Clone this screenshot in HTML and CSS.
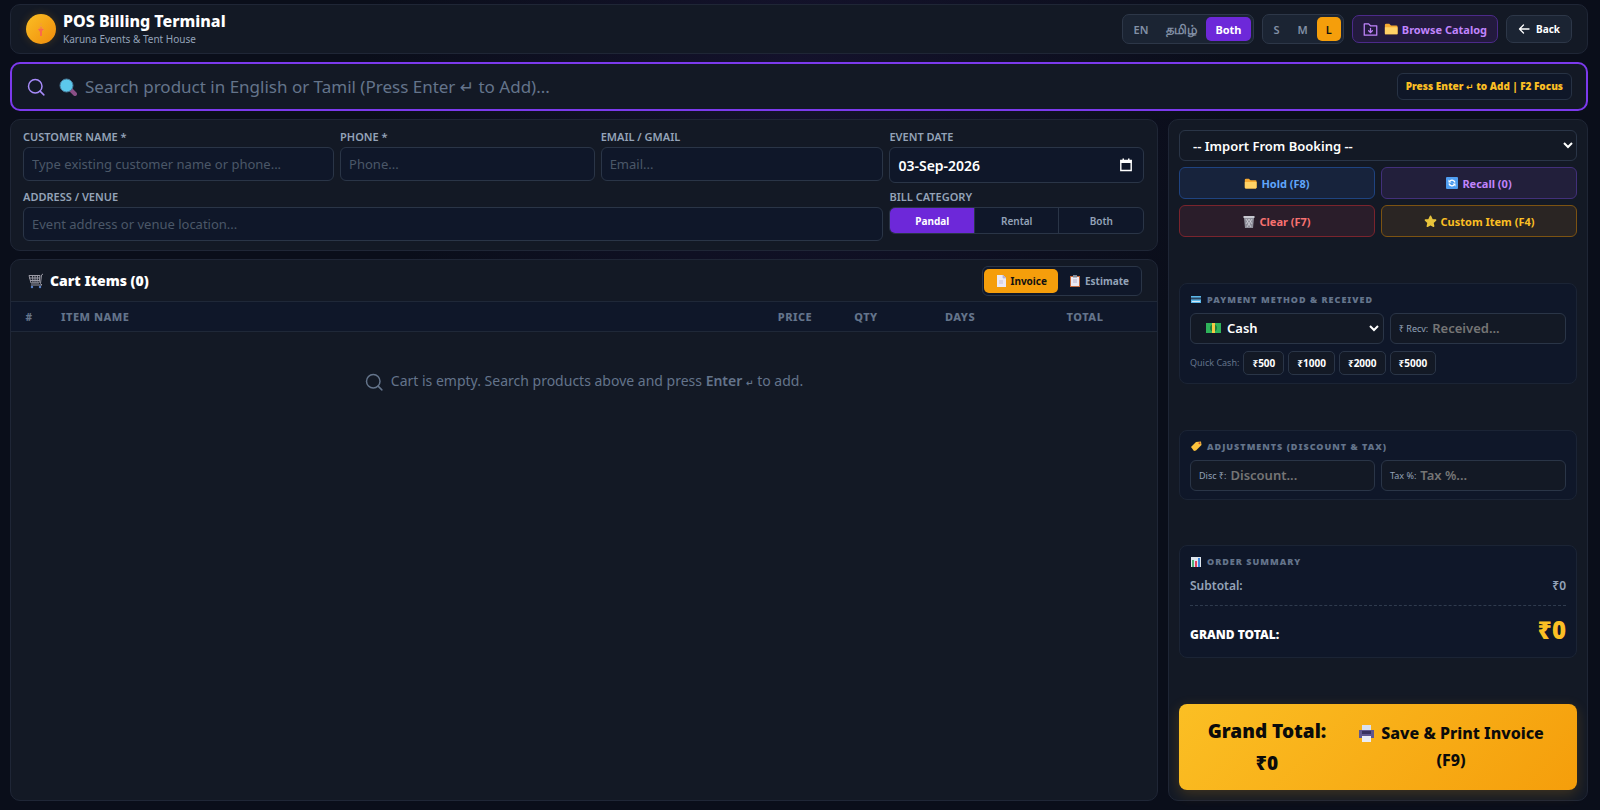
FILE: index.html
```html
<!DOCTYPE html>
<html lang="en">
<head>
  <meta charset="UTF-8">
  <meta name="viewport" content="width=device-width, initial-scale=1.0">
  <title>POS Billing Terminal</title>
  <link rel="stylesheet" href="styles.css">
</head>
<body>
  <!-- Shared icons -->
  <svg class="sprite" aria-hidden="true">
    <symbol id="search" viewBox="0 0 24 24"><circle cx="11" cy="11" r="9" fill="none" stroke="currentColor" stroke-width="2"/><path d="M17.5 17.5 22.5 22.5" stroke="currentColor" stroke-width="2" stroke-linecap="round"/></symbol>
    <symbol id="folder" viewBox="0 0 16 16"><path d="M1 3.5Q1 2 2.5 2H6l2 2h6q1.500 0 1.500 1.500V13q0 1-1 1H2q-1 0-1-1z" fill="#f5a932"/><path d="M1 6h14.500v7q0 1-1 1H2q-1 0-1-1z" fill="#ffd266"/></symbol>
  </svg>

  <div class="terminal">
    <header class="panel topbar">
      <div class="logo">
        <svg width="12" height="18" viewBox="0 0 12 18"><path d="M6 3v2M3 10l3-4 3 4z" stroke="#f59a3c" fill="#f5853c"/><path d="M3 9h6l-2 2v5H5v-4z" fill="#fb6a4a"/></svg>
      </div>
      <div class="brand">
        <h1>POS Billing Terminal</h1>
        <p>Karuna Events &amp; Tent House</p>
      </div>
      <div class="top-actions">
        <div class="pill-group">
          <button type="button">EN</button>
          <button type="button" lang="ta">தமிழ்</button>
          <button type="button" class="active-purple">Both</button>
        </div>
        <div class="pill-group">
          <button type="button">S</button>
          <button type="button">M</button>
          <button type="button" class="active-amber">L</button>
        </div>
        <button type="button" class="top-btn catalog">
          <svg width="15" height="15" viewBox="0 0 24 24" fill="none" stroke="currentColor" stroke-width="2" stroke-linejoin="round" stroke-linecap="round"><path d="M2 3h7l3 3h10v15H2zM12 10v7M9 14l3 3 3-3"/></svg>
          <span class="with-icon"><svg width="14" height="14"><use href="#folder"/></svg>Browse Catalog</span>
        </button>
        <button type="button" class="top-btn">
          <svg width="12" height="12" viewBox="0 0 12 12" fill="none" stroke="currentColor" stroke-width="1.300" stroke-linecap="round" stroke-linejoin="round"><path d="M11 6H1.500M5.500 2l-4 4 4 4"/></svg>
          Back
        </button>
      </div>
    </header>

    <div class="search-bar">
      <svg class="search-icon" width="18" height="18"><use href="#search"/></svg>
      <svg width="18" height="18" viewBox="0 0 18 18"><path d="M11 11l5 5" stroke="#8a4f86" stroke-width="4" stroke-linecap="round"/><circle cx="7.500" cy="7.500" r="6.500" fill="#5cc8ec" stroke="#4a7d9c"/></svg>
      <input type="text" aria-label="Search product" placeholder="Search product in English or Tamil (Press Enter ↵ to Add)...">
      <span class="hint">Press Enter <span class="key">↵</span> to Add | F2 Focus</span>
    </div>

    <div class="workspace">
      <main class="main-col">
        <form class="panel customer">
          <div class="field">
            <label for="customer">Customer Name *</label>
            <input type="text" id="customer" placeholder="Type existing customer name or phone...">
          </div>
          <div class="field">
            <label for="phone">Phone *</label>
            <input type="tel" id="phone" placeholder="Phone...">
          </div>
          <div class="field">
            <label for="email">Email / Gmail</label>
            <input type="email" id="email" placeholder="Email...">
          </div>
          <div class="field">
            <label for="eventDate">Event Date</label>
            <div class="date-box">
              <input type="text" id="eventDate" value="03-Sep-2026">
              <svg width="12" height="14" viewBox="0 0 12 14"><path d="M.800 2.500h10.400v10H.800z" fill="none" stroke="#fff" stroke-width="1.400"/><path d="M.500 2h11v3H.500zM2.500.500h1.500V3H2.500zM8 .500h1.500V3H8z" fill="#fff"/></svg>
            </div>
          </div>
          <div class="field address">
            <label for="address">Address / Venue</label>
            <input type="text" id="address" placeholder="Event address or venue location...">
          </div>
          <div class="field" role="group" aria-labelledby="categoryLabel">
            <span class="field-label" id="categoryLabel">Bill Category</span>
            <div class="segments">
              <button type="button" class="active-purple">Pandal</button>
              <button type="button">Rental</button>
              <button type="button">Both</button>
            </div>
          </div>
        </form>

        <section class="panel cart">
          <div class="cart-head">
            <svg width="16" height="16" viewBox="0 0 16 16" fill="none"><path d="M1 2.500h11L11 10H3z M1 5h11M2 7.500h10M4.500 2.500l.5 7.500M7 2.500V10M9.500 2.500 9 10M15 1l-1.500 1-1 8.500 1.500 1.500H3" stroke="#9a9aa5"/><circle cx="4" cy="14" r="1.200" fill="#5b83c9"/><circle cx="12" cy="14" r="1.200" fill="#5b83c9"/></svg>
            <h2>Cart Items (0)</h2>
            <div class="doc-type">
              <button type="button" class="active-amber">
                <svg width="12" height="12" viewBox="0 0 12 12"><path d="M2 0h6l3 3v9H2z" fill="#ece9f2"/><path d="M8 0v3h3zM4 6h4M4 8h4" fill="#b9b2cc" stroke="#b9b2cc" stroke-width=".7"/></svg>
                Invoice
              </button>
              <button type="button">
                <svg width="12" height="12" viewBox="0 0 12 12"><path d="M1 1h10v11H1z" fill="#c1693f"/><path d="M2 2h8v9H2z" fill="#ece9f2"/><path d="M4 0h4v2.500H4z" fill="#7f8794"/><path d="M4 5h4M4 7h4" stroke="#b9b2cc"/></svg>
                Estimate
              </button>
            </div>
          </div>
          <table>
            <thead>
              <tr>
                <th class="col-no">#</th>
                <th class="col-item">Item Name</th>
                <th class="col-price">Price</th>
                <th class="col-qty">Qty</th>
                <th class="col-days">Days</th>
                <th class="col-total">Total</th>
              </tr>
            </thead>
            <tbody>
              <tr>
                <td colspan="6">
                  <div class="empty">
                    <svg width="18" height="18"><use href="#search"/></svg>
                    <span>Cart is empty. Search products above and press <strong>Enter <span class="key">↵</span></strong> to add.</span>
                  </div>
                </td>
              </tr>
            </tbody>
          </table>
        </section>
      </main>

      <aside class="panel side">
        <div class="quick">
          <select class="booking" aria-label="Import from booking">
            <option>-- Import From Booking --</option>
          </select>
          <button type="button" class="action hold"><svg width="13" height="13"><use href="#folder"/></svg>Hold (F8)</button>
          <button type="button" class="action recall"><svg width="12" height="12" viewBox="0 0 12 12"><rect width="12" height="12" rx="1" fill="#4f9df0"/><path d="M9 5.500A3 3 0 0 0 4 4M3 6.500A3 3 0 0 0 8 8" fill="none" stroke="#fff" stroke-width="1.300"/><path d="M2.500 2.500v3h3zM9.500 9.500v-3h-3z" fill="#fff"/></svg>Recall (0)</button>
          <button type="button" class="action clear"><svg width="12" height="13" viewBox="0 0 12 13"><path d="M.500 1h11v2H.500z" fill="#c9c9d1"/><path d="M1 3h10l-1 10H2z" fill="#8e8e99"/><path d="M3 4l5 8M6 4l3 5M9 4l-5 8M6 4l-3 5" stroke="#d0d0d8" stroke-width=".8"/></svg>Clear (F7)</button>
          <button type="button" class="action custom"><svg width="13" height="13" viewBox="0 0 12 12"><path d="M6 1.200l1.400 3.100 3.300.400-2.500 2.300.700 3.400L6 8.800 3.100 10.400l.700-3.400-2.500-2.300 3.300-.400z" fill="#e9c53c" stroke="#e9c53c" stroke-width="1.400" stroke-linejoin="round"/></svg>Custom Item (F4)</button>
        </div>

        <section class="box">
          <h3><svg width="12" height="10" viewBox="0 0 12 10"><path d="M1 2h10v7H1z" fill="#5cb8ea"/><path d="M1 3.500h10v2H1z" fill="#2b4560"/><path d="M2 7h8v1H2z" fill="#d5e7f2"/></svg>Payment Method &amp; Received</h3>
          <div class="pay-row">
            <div class="control pay-method">
              <svg width="15" height="12" viewBox="0 0 15 12"><path d="M0 1h15v10H0z" fill="#2fb35a"/><circle cx="7.500" cy="6" r="3.500" fill="#1c7c3c"/><path d="M6 1h3v10H6z" fill="#f6c945"/></svg>
              <select aria-label="Payment method"><option>Cash</option></select>
            </div>
            <div class="control">
              <label for="received">₹ Recv:</label>
              <input type="text" id="received" placeholder="Received...">
            </div>
          </div>
          <div class="cash-row">
            <span>Quick Cash:</span>
            <button type="button">₹500</button>
            <button type="button">₹1000</button>
            <button type="button">₹2000</button>
            <button type="button">₹5000</button>
          </div>
        </section>

        <section class="box">
          <h3><svg width="12" height="10" viewBox="0 0 12 10"><path d="M1 6l5-5 5-.500L11.500 4 6 9.500 4 10z" fill="#fbc13c"/><circle cx="9.500" cy="2.300" r="1" fill="#c74b36"/></svg>Adjustments (Discount &amp; Tax)</h3>
          <div class="adjust-row">
            <div class="control">
              <label for="discount">Disc ₹:</label>
              <input type="text" id="discount" placeholder="Discount...">
            </div>
            <div class="control">
              <label for="tax">Tax %:</label>
              <input type="text" id="tax" placeholder="Tax %...">
            </div>
          </div>
        </section>

        <section class="box">
          <h3><svg width="12" height="12" viewBox="0 0 12 12"><path d="M1 1h10v10H1z" fill="#dfe6ee"/><path d="M2 4h2v7H2z" fill="#4eb077"/><path d="M5 5h2v6H5z" fill="#e5405e"/><path d="M8 2h2v9H8z" fill="#3f86dc"/></svg>Order Summary</h3>
          <div class="subtotal"><span>Subtotal:</span><span>₹0</span></div>
          <div class="grand"><span>GRAND TOTAL:</span><strong>₹0</strong></div>
        </section>

        <button type="button" class="save-btn">
          <span class="save-total">Grand Total: ₹0</span>
          <span class="save-text"><svg width="17" height="17" viewBox="0 0 17 17"><path d="M4 0h9v6H4z" fill="#d9e0f0"/><path d="M1 5h15v8H1z" fill="#5f5790"/><path d="M4 6h9v3H4z" fill="#37315f"/><path d="M4 11h9v6H4z" fill="#e9ecf6"/></svg> Save &amp; Print Invoice (F9)</span>
        </button>
      </aside>
    </div>
  </div>
</body>
</html>
```
FILE: styles.css
```css
* {
  box-sizing: border-box;
}
body {
  margin: 0;
  font-family: "Noto Sans", "Segoe UI", "DejaVu Sans", sans-serif;
  font-size: 13px;
  color: #fff;
  background: radial-gradient(circle at 50% 8%, #14122c 0, #0a0e1a 40%);
  background-color: #0a0e1a;
}
h1, h2, h3, p {
  margin: 0;
}
button, input, select {
  font-family: inherit;
  color: inherit;
}
button {
  cursor: pointer;
  padding: 0;
  border: 0;
  background: none;
}
input {
  min-width: 0;
  outline: none;
}
svg {
  flex: none;
}
.sprite {
  position: absolute;
  width: 0;
  height: 0;
}
.terminal {
  display: flex;
  flex-direction: column;
  gap: 8px;
  min-height: 100vh;
  padding: 4px 12px 9px 10px;
}
.panel {
  background: #131925;
  border: 1px solid #1f2636;
  border-radius: 10px;
}
.key {
  font-size: 9px;
}

/* Top bar */
.topbar {
  display: flex;
  align-items: center;
  height: 50px;
  padding: 0 15px;
}
.logo {
  display: flex;
  align-items: center;
  justify-content: center;
  width: 30px;
  height: 30px;
  border-radius: 50%;
  background: linear-gradient(135deg, #fbbf24, #f08c0c);
  box-shadow: 0 0 10px rgba(245, 158, 11, 0.2);
}
.brand {
  margin-left: 7px;
}
.brand h1 {
  font-size: 16px;
  font-weight: 800;
  line-height: 19px;
}
.brand p {
  font-size: 10px;
  line-height: 16px;
  color: #94a3b8;
}
.top-actions {
  display: flex;
  align-items: center;
  gap: 8px;
  margin-left: auto;
}
.pill-group {
  display: flex;
  height: 30px;
  padding: 2px;
  border: 1px solid #2d3748;
  border-radius: 7px;
  background: #1b2433;
}
.pill-group button {
  padding: 0 9px;
  border-radius: 5px;
  font-size: 11px;
  font-weight: 600;
  color: #8290a6;
}
.pill-group button:lang(ta) {
  font-size: 13px;
}
.pill-group .active-purple,
.segments .active-purple {
  background: #6d28d9;
  color: #fff;
  font-weight: 700;
}
.pill-group .active-amber,
.doc-type .active-amber {
  background: #f59e0b;
  color: #111;
}
.top-btn {
  display: flex;
  align-items: center;
  gap: 6px;
  height: 28px;
  padding: 0 11px;
  border: 1px solid #2d3748;
  border-radius: 7px;
  background: #1b2433;
  font-size: 10px;
  font-weight: 700;
}
.catalog {
  padding: 0 10px;
  color: #c084fc;
  border-color: #4c2a8a;
  background: #231a3e;
  font-size: 11px;
}
.with-icon {
  display: flex;
  align-items: center;
  gap: 4px;
}

/* Search */
.search-bar {
  display: flex;
  align-items: center;
  height: 49px;
  padding: 0 14px 0 15px;
  border: 2px solid #7c3aed;
  border-radius: 10px;
  background: #131925;
}
.search-icon {
  margin-right: 14px;
  color: #a78bfa;
}
.search-bar input {
  flex: 1;
  padding: 0 0 0 8px;
  border: 0;
  background: none;
  font-size: 17px;
}
.search-bar input::placeholder {
  color: #64748b;
}
.hint {
  padding: 0 8px;
  border: 1px solid #273244;
  border-radius: 6px;
  background: #0f1728;
  font-size: 10px;
  font-weight: 900;
  line-height: 24px;
  color: #fbbf24;
}

/* Columns */
.workspace {
  display: flex;
  flex: 1;
  gap: 10px;
}
.main-col {
  display: flex;
  flex: 1;
  flex-direction: column;
  gap: 8px;
  min-width: 0;
}

/* Customer form */
.customer {
  display: grid;
  grid-template-columns: 22fr 18fr 20fr 18fr;
  gap: 6px;
  padding: 9px 13px 9px 12px;
}
.field {
  display: flex;
  flex-direction: column;
  gap: 2px;
  min-width: 0;
}
.address {
  grid-column: span 3;
}
.field label,
.field-label {
  font-size: 11px;
  font-weight: 600;
  line-height: 16px;
  text-transform: uppercase;
  color: #94a3b8;
}
.field input {
  height: 34px;
  padding: 0 8px;
  border: 1px solid #2a3547;
  border-radius: 6px;
  background: #0f1729;
  font-size: 13px;
}
.field input::placeholder {
  color: #4b5768;
}
.date-box {
  display: flex;
  align-items: center;
  height: 36px;
  padding-right: 11px;
  border: 1px solid #2a3547;
  border-radius: 6px;
  background: #0f1729;
}
.field .date-box input {
  flex: 1;
  border: 0;
  background: none;
  font-size: 14px;
  font-weight: 600;
}
.segments {
  display: flex;
  height: 27px;
  border: 1px solid #2a3547;
  border-radius: 6px;
  background: #0f1729;
  overflow: hidden;
}
.segments button {
  flex: 1;
  font-size: 10px;
  font-weight: 600;
  color: #94a3b8;
}
.segments button + button {
  border-left: 1px solid #2a3547;
}

/* Cart */
.cart {
  flex: 1;
  overflow: hidden;
}
.cart-head {
  display: flex;
  align-items: center;
  gap: 6px;
  height: 41px;
  padding: 0 15px 0 17px;
}
.cart-head h2 {
  font-size: 14px;
  font-weight: 900;
}
.doc-type {
  display: flex;
  height: 30px;
  margin-left: auto;
  padding: 2px 1px;
  border: 1px solid #2a3547;
  border-radius: 6px;
  background: #0f1729;
}
.doc-type button {
  display: flex;
  align-items: center;
  gap: 4px;
  padding: 0 11px;
  border-radius: 5px;
  font-size: 10px;
  font-weight: 700;
  color: #94a3b8;
}
.cart table {
  width: 100%;
  table-layout: fixed;
  border-collapse: collapse;
}
.cart th {
  height: 30px;
  padding: 0;
  border-top: 1px solid #1f2838;
  border-bottom: 1px solid #1f2838;
  background: #0f1729;
  font-size: 11px;
  font-weight: 800;
  letter-spacing: 0.5px;
  text-transform: uppercase;
  color: #64748b;
}
.cart .col-no {
  width: 36px;
  font-size: 10px;
}
.cart .col-item {
  padding-left: 14px;
  text-align: left;
}
.col-price {
  width: 60px;
}
.col-qty {
  width: 82px;
}
.col-days {
  width: 106px;
}
.col-total {
  width: 144px;
}
.cart td {
  padding: 39px 0;
}
.empty {
  display: flex;
  align-items: center;
  justify-content: center;
  gap: 8px;
  font-size: 14px;
  line-height: 20px;
  color: #64748b;
}
.empty strong {
  font-weight: 600;
}

/* Side panel */
.side {
  display: flex;
  flex-direction: column;
  justify-content: space-between;
  width: 420px;
  padding: 10px;
}
.quick {
  display: grid;
  grid-template-columns: 1fr 1fr;
  gap: 6px;
}
.booking {
  grid-column: span 2;
  height: 31px;
  padding: 0 0 0 9px;
  border: 1px solid #2a3547;
  border-radius: 6px;
  background: #131925;
  font-size: 13px;
  font-weight: 600;
}
.action {
  display: flex;
  align-items: center;
  justify-content: center;
  gap: 4px;
  height: 32px;
  border: 1px solid;
  border-radius: 6px;
  font-size: 11px;
  font-weight: 700;
}
.hold {
  color: #60a5fa;
  border-color: #1f4380;
  background: #17233c;
}
.recall {
  color: #c084fc;
  border-color: #42307a;
  background: #221f3b;
}
.clear {
  color: #f87171;
  border-color: #7a242d;
  background: #2a1d2a;
}
.custom {
  color: #fbbf24;
  border-color: #7c5312;
  background: #2a2523;
}
.box {
  padding: 8px 10px;
  border: 1px solid #1b2435;
  border-radius: 8px;
  background: #0f1729;
}
.box h3 {
  display: flex;
  align-items: center;
  gap: 5px;
  margin-bottom: 6px;
  font-size: 9px;
  font-weight: 900;
  line-height: 15px;
  letter-spacing: 1px;
  text-transform: uppercase;
  color: #64748b;
}
.pay-row,
.adjust-row {
  display: grid;
  grid-template-columns: 11fr 10fr;
  gap: 6px;
}
.adjust-row {
  grid-template-columns: 1fr 1fr;
}
.control {
  display: flex;
  align-items: center;
  gap: 4px;
  min-width: 0;
  height: 31px;
  padding: 0 8px;
  border: 1px solid #2a3547;
  border-radius: 6px;
  background: #131925;
}
.control label {
  flex: none;
  font-size: 9px;
  color: #94a3b8;
}
.control input,
.control select {
  flex: 1;
  padding: 0;
  border: 0;
  background: none;
  font-size: 13px;
  font-weight: 600;
}
.control input::placeholder {
  color: #757575;
}
.pay-method {
  gap: 2px;
  padding: 0 1px 0 15px;
}
.cash-row {
  display: flex;
  align-items: center;
  gap: 4px;
  margin-top: 7px;
}
.cash-row span {
  font-size: 9px;
  color: #64748b;
}
.cash-row button {
  height: 24px;
  padding: 0 8px;
  border: 1px solid #2a3547;
  border-radius: 5px;
  background: #131925;
  font-size: 10px;
  font-weight: 700;
}
.subtotal,
.grand {
  display: flex;
  align-items: center;
  justify-content: space-between;
}
.subtotal {
  padding-bottom: 8px;
  border-bottom: 1px dashed #2f3b4e;
  font-size: 12px;
  font-weight: 600;
  line-height: 22px;
  color: #94a3b8;
}
.grand {
  align-items: baseline;
  padding: 8px 0 3px;
  font-size: 12px;
  font-weight: 900;
}
.grand strong {
  font-size: 24px;
  font-weight: 900;
  line-height: 32px;
  color: #fbbf24;
}
.save-btn {
  display: flex;
  align-items: center;
  justify-content: space-between;
  gap: 16px;
  height: 86px;
  padding: 0 23px;
  border-radius: 8px;
  background: linear-gradient(135deg, #fbbf24, #f59e0b);
  box-shadow: 0 4px 14px rgba(245, 158, 11, 0.2);
  color: #0b0b0b;
}
.save-total {
  flex: 0 0 130px;
  font-size: 19px;
  font-weight: 900;
  line-height: 32px;
}
.save-text {
  flex: 1;
  font-size: 16px;
  font-weight: 800;
  line-height: 27px;
}
.save-text svg {
  margin-right: 2px;
  vertical-align: -3px;
}
```
